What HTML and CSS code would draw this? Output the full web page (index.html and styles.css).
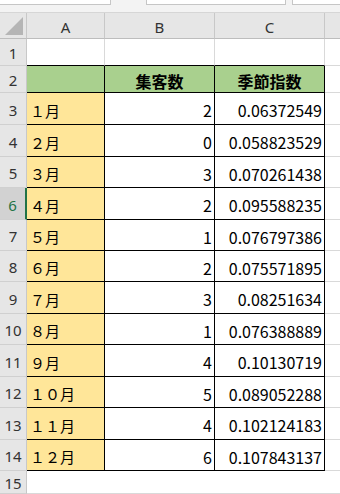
FILE: index.html
```html
<!DOCTYPE html>
<html lang="ja">
<head>
<meta charset="utf-8">
<link rel="stylesheet" href="styles.css">
</head>
<body>
<div class="sheet">
  <div class="topbar"><span class="box b1"></span><span class="box b2"></span><span class="box b3"></span></div>

  <div class="corner"><span class="tri"></span></div>
  <div class="colh">A</div>
  <div class="colh">B</div>
  <div class="colh">C</div>
  <div class="colh last"></div>

  <div class="rowh">1</div>
  <div class="cell r1"></div><div class="cell r1"></div><div class="cell r1"></div><div class="cell plain"></div>

  <div class="rowh">2</div>
  <div class="cell t hd g"></div><div class="cell t hd g">集客数</div><div class="cell t hd g rb">季節指数</div><div class="cell plain"></div>

  <div class="rowh">3</div>
  <div class="cell t m">１月</div><div class="cell t n">2</div><div class="cell t n rb">0.06372549</div><div class="cell plain"></div>
  <div class="rowh">4</div>
  <div class="cell t m">２月</div><div class="cell t n">0</div><div class="cell t n rb">0.058823529</div><div class="cell plain"></div>
  <div class="rowh">5</div>
  <div class="cell t m">３月</div><div class="cell t n">3</div><div class="cell t n rb">0.070261438</div><div class="cell plain"></div>
  <div class="rowh active">6</div>
  <div class="cell t m">４月</div><div class="cell t n">2</div><div class="cell t n rb">0.095588235</div><div class="cell plain"></div>
  <div class="rowh">7</div>
  <div class="cell t m">５月</div><div class="cell t n">1</div><div class="cell t n rb">0.076797386</div><div class="cell plain"></div>
  <div class="rowh">8</div>
  <div class="cell t m">６月</div><div class="cell t n">2</div><div class="cell t n rb">0.075571895</div><div class="cell plain"></div>
  <div class="rowh">9</div>
  <div class="cell t m">７月</div><div class="cell t n">3</div><div class="cell t n rb">0.08251634</div><div class="cell plain"></div>
  <div class="rowh">10</div>
  <div class="cell t m">８月</div><div class="cell t n">1</div><div class="cell t n rb">0.076388889</div><div class="cell plain"></div>
  <div class="rowh">11</div>
  <div class="cell t m">９月</div><div class="cell t n">4</div><div class="cell t n rb">0.10130719</div><div class="cell plain"></div>
  <div class="rowh">12</div>
  <div class="cell t m">１０月</div><div class="cell t n">5</div><div class="cell t n rb">0.089052288</div><div class="cell plain"></div>
  <div class="rowh">13</div>
  <div class="cell t m">１１月</div><div class="cell t n">4</div><div class="cell t n rb">0.102124183</div><div class="cell plain"></div>
  <div class="rowh">14</div>
  <div class="cell t m">１２月</div><div class="cell t n">6</div><div class="cell t n rb">0.107843137</div><div class="cell plain"></div>

  <div class="rowh">15</div>
  <div class="cell plain"></div><div class="cell plain"></div><div class="cell plain"></div><div class="cell plain"></div>
</div>
</body>
</html>
```
FILE: styles.css
```css
html, body {
  margin: 0;
  padding: 0;
  background: #ffffff;
}
.sheet {
  width: 340px;
  height: 494px;
  overflow: hidden;
  display: grid;
  grid-template-columns: 27px 78px 110px 110px 1fr;
  grid-template-rows: 13px 26px 27px 27px 32px 32px 31px 32px 31px 31px 32px 31px 32px 31px 32px 31px 1fr;
  font-family: "Noto Sans CJK JP", "Noto Sans", sans-serif;
  color: #000;
}
.topbar {
  grid-column: 1 / -1;
  background: #f3f3f3;
  position: relative;
  border-bottom: 1px solid #d6d6d6;
  box-sizing: border-box;
}
.box {
  position: absolute;
  top: 0;
  height: 4px;
  background: #fff;
  border: 1px solid #c6c6c6;
  border-top: none;
}
.b1 { left: -1px; width: 110px; }
.b2 { left: 146px; width: 138px; }
.b3 { left: 292px; width: 60px; }
.corner {
  background: #e6e6e6;
  border-right: 1px solid #c8c8c8;
  border-bottom: 1px solid #bdbdbd;
  box-sizing: border-box;
  position: relative;
}
.tri {
  position: absolute;
  left: 5px;
  top: 4px;
  width: 0;
  height: 0;
  border-left: 18px solid transparent;
  border-bottom: 18px solid #b5b5b5;
}
.colh {
  background: #e6e6e6;
  border-right: 1px solid #c8c8c8;
  border-bottom: 1px solid #bdbdbd;
  box-sizing: border-box;
  display: flex;
  align-items: center;
  justify-content: center;
  font-family: "Noto Sans", sans-serif;
  font-size: 15px;
  color: #333;
  padding-top: 2px;
}
.colh.last { border-right: none; }
.rowh {
  background: #e6e6e6;
  border-right: 1px solid #c8c8c8;
  border-bottom: 1px solid #d0d0d0;
  box-sizing: border-box;
  display: flex;
  align-items: center;
  justify-content: center;
  font-family: "Noto Sans", sans-serif;
  font-size: 15px;
  color: #333;
  padding-top: 2px;
}
.rowh.active {
  background: #d2d2d2;
  color: #217346;
  border-right: 2px solid #217346;
}
.cell {
  box-sizing: border-box;
  border-right: 1px solid #d9d9d9;
  border-bottom: 1px solid #d9d9d9;
  background: #fff;
  display: flex;
  align-items: center;
  font-size: 15px;
  white-space: nowrap;
  overflow: hidden;
  padding-top: 3px;
}
.cell.r1 { border-bottom: 1px solid #000; }
.cell.plain { border-right: none; }
.cell.t {
  border-right: 1px solid #000;
  border-bottom: 1px solid #000;
}
.cell.g {
  background: #a9d08e;
  justify-content: center;
  font-weight: bold;
  font-size: 16px;
}
.cell.m {
  background: #ffe699;
  padding-left: 3px;
}
.cell.n {
  justify-content: flex-end;
  padding-right: 2px;
  font-size: 16px;
}
```
